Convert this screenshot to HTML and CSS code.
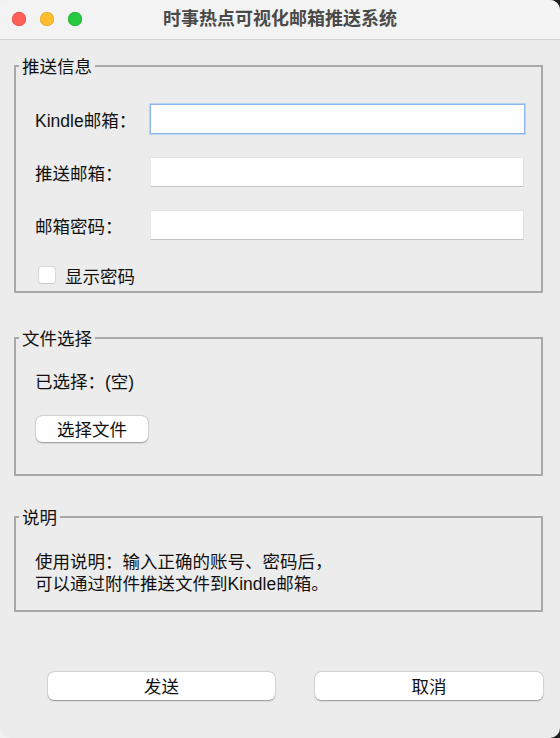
FILE: index.html
```html
<!DOCTYPE html>
<html lang="zh">
<head>
<meta charset="utf-8">
<title>时事热点可视化邮箱推送系统</title>
<link rel="stylesheet" href="styles.css">
</head>
<body>
<div class="window">
  <header class="titlebar">
    <div class="lights">
      <span class="light red"></span>
      <span class="light yellow"></span>
      <span class="light green"></span>
    </div>
    <div class="title">时事热点可视化邮箱推送系统</div>
  </header>
  <main class="content">
    <fieldset class="group group-push">
      <legend>推送信息</legend>
      <div class="row">
        <label class="label">Kindle邮箱：</label>
        <div class="input focused"></div>
      </div>
      <div class="row">
        <label class="label">推送邮箱：</label>
        <div class="input"></div>
      </div>
      <div class="row">
        <label class="label">邮箱密码：</label>
        <div class="input"></div>
      </div>
      <div class="check-row">
        <span class="checkbox"></span>
        <span class="check-text">显示密码</span>
      </div>
    </fieldset>

    <fieldset class="group group-file">
      <legend>文件选择</legend>
      <div class="text-line">已选择：(空)</div>
      <button class="btn btn-small">选择文件</button>
    </fieldset>

    <fieldset class="group group-info">
      <legend>说明</legend>
      <p class="desc">使用说明：输入正确的账号、密码后，<br>可以通过附件推送文件到Kindle邮箱。</p>
    </fieldset>

    <div class="actions">
      <button class="btn btn-wide">发送</button>
      <button class="btn btn-wide">取消</button>
    </div>
  </main>
</div>
</body>
</html>
```

FILE: styles.css
```css
* { box-sizing: border-box; }

html {
  margin: 0;
  height: 738px;
  background: linear-gradient(90deg, #f2f2f2 50%, #1c1c1c 50%);
}

body {
  margin: 0;
  height: 738px;
  font-family: "Liberation Sans", "Noto Sans CJK SC", sans-serif;
  font-size: 17.5px;
  color: #111;
}

.window {
  height: 738px;
  background: #ececec;
  border-radius: 10px;
  overflow: hidden;
  display: flex;
  flex-direction: column;
}

.titlebar {
  position: relative;
  height: 40px;
  flex: none;
  background: #f3f3f3;
  border-bottom: 1px solid #d2d2d2;
  display: flex;
  align-items: center;
  justify-content: center;
}

.lights {
  position: absolute;
  left: 12px;
  top: 12px;
  display: flex;
  gap: 14px;
}

.light {
  width: 14px;
  height: 14px;
  border-radius: 50%;
}
.red { background: #fe5f57; box-shadow: inset 0 0 0 0.5px #e0443e; }
.yellow { background: #febc2e; box-shadow: inset 0 0 0 0.5px #dea123; }
.green { background: #28c840; box-shadow: inset 0 0 0 0.5px #1aab29; }

.title {
  font-size: 18px;
  font-weight: bold;
  color: #4a4a4a;
  line-height: 20px;
  margin-top: -1px;
}

.content {
  padding: 17px 17px 0 14px;
}

.group {
  margin: 0;
  border: 2px solid #a8a8a8;
  border-radius: 0;
  padding: 0 16px 0 19px;
  min-width: 0;
}

.group legend {
  margin-left: -16px;
  padding: 0 3px;
  line-height: 18px;
  font-size: 17.5px;
  position: relative;
  top: 1px;
}

.group-push { padding-top: 29px; padding-bottom: 6px; }
.group-file { margin-top: 36px; padding-top: 23px; padding-bottom: 32px; }
.group-info { margin-top: 32px; padding-top: 22px; padding-bottom: 18px; }

.row {
  display: flex;
  align-items: center;
  height: 30px;
  margin-bottom: 23px;
}

.label {
  width: 115px;
  flex: none;
  line-height: 30px;
  padding-top: 3px;
}

.input {
  flex: 1;
  height: 30px;
  background: #fff;
  border-top: 1px solid #e4e4e4;
  border-left: 1px solid #e8e8e8;
  border-right: 1px solid #e0e0e0;
  border-bottom: 1px solid #c4c4c4;
  margin-right: 1px;
}

.input.focused {
  border: 1px solid #8db7ee;
  box-shadow: 0 0 0 1px #b9d4f6;
  margin-right: 0;
}

.check-row {
  display: flex;
  align-items: center;
  height: 22px;
  padding-left: 3px;
}

.checkbox {
  width: 18px;
  height: 18px;
  background: #fff;
  border: 1px solid #d8d8d8;
  border-bottom-color: #c8c8c8;
  border-radius: 4px;
  margin-right: 9px;
  margin-top: 1px;
}

.check-text {
  line-height: 22px;
  padding-top: 6px;
}

.text-line {
  line-height: 20px;
  padding-top: 2px;
  margin-bottom: -2px;
}

.btn {
  font-family: "Liberation Sans", "Noto Sans CJK SC", sans-serif;
  font-size: 17.5px;
  color: #111;
  background: #fff;
  border: none;
  border-radius: 6px;
  box-shadow: 0 0.5px 1.5px rgba(0, 0, 0, 0.35), 0 0 0 0.5px rgba(0, 0, 0, 0.08);
  padding: 0;
  display: block;
}

.btn-small {
  margin-top: 26px;
  margin-left: 1px;
  width: 112px;
  height: 26px;
  line-height: 26px;
  padding-top: 1px;
}

.desc {
  margin: 0;
  line-height: 22px;
  padding-top: 3px;
  margin-bottom: -3px;
}

.actions {
  margin-top: 60px;
  margin-left: 34px;
  display: grid;
  grid-template-columns: 227px 228px;
  column-gap: 40px;
}

.btn-wide {
  height: 28px;
  line-height: 28px;
  padding-top: 1px;
}
```
